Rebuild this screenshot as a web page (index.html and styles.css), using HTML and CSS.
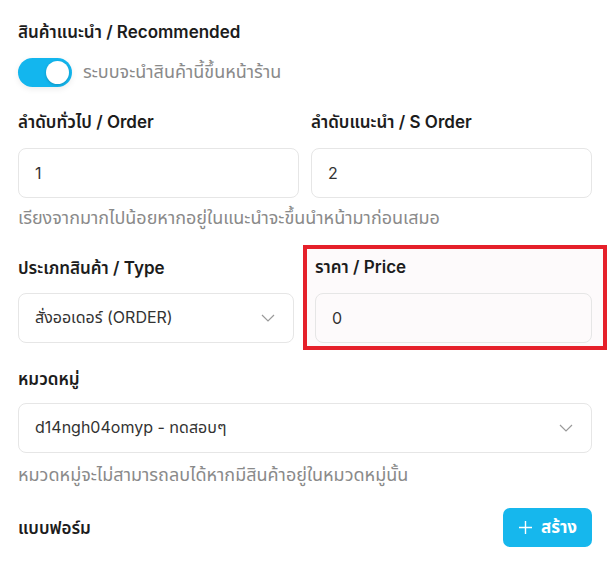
FILE: index.html
```html
<!DOCTYPE html>
<html lang="th">
<head>
<meta charset="utf-8">
<title>Product form</title>
<link rel="stylesheet" href="styles.css">
</head>
<body>
<div class="form">
  <div class="label first">สินค้าแนะนำ / Recommended</div>
  <div class="toggle-row">
    <span class="toggle"><span class="knob"></span></span>
    <span class="toggle-text">ระบบจะนำสินค้านี้ขึ้นหน้าร้าน</span>
  </div>

  <div class="grid2">
    <div class="field">
      <div class="label">ลำดับทั่วไป / Order</div>
      <div class="input">1</div>
    </div>
    <div class="field">
      <div class="label">ลำดับแนะนำ / S Order</div>
      <div class="input">2</div>
    </div>
  </div>
  <p class="help">เรียงจากมากไปน้อยหากอยู่ในแนะนำจะขึ้นนำหน้ามาก่อนเสมอ</p>

  <div class="grid-type">
    <div class="field type-field">
      <div class="label">ประเภทสินค้า / Type</div>
      <div class="input select">
        <span>สั่งออเดอร์ (ORDER)</span>
        <svg class="chev" width="14" height="8" viewBox="0 0 14 8"><path d="M1 1l6 6 6-6" fill="none" stroke="#9a9a9a" stroke-width="1.2"/></svg>
      </div>
    </div>
    <div class="highlight">
      <div class="label">ราคา / Price</div>
      <div class="input price">0</div>
    </div>
  </div>

  <div class="label cat-label">หมวดหมู่</div>
  <div class="input select">
    <span>d14ngh04omyp - ทดสอบๆ</span>
    <svg class="chev" width="14" height="8" viewBox="0 0 14 8"><path d="M1 1l6 6 6-6" fill="none" stroke="#9a9a9a" stroke-width="1.2"/></svg>
  </div>
  <p class="help cat-help">หมวดหมู่จะไม่สามารถลบได้หากมีสินค้าอยู่ในหมวดหมู่นั้น</p>

  <div class="form-row">
    <div class="label">แบบฟอร์ม</div>
    <button class="btn">
      <svg width="15" height="15" viewBox="0 0 15 15"><path d="M7.5 1v13M1 7.5h13" stroke="#fff" stroke-width="1.4" fill="none"/></svg>
      <span>สร้าง</span>
    </button>
  </div>
</div>
</body>
</html>
```
FILE: styles.css
```css
* { box-sizing: border-box; }
html, body { margin: 0; padding: 0; background: #fff; }
body {
  font-family: "Inter", "Noto Sans", "Noto Sans Thai", sans-serif;
  font-size: 16px;
  color: #1f1f1f;
}
.form {
  width: 574px;
  margin-left: 18px;
  padding-top: 20px;
}
.label {
  font-weight: 600;
  font-size: 17px;
  line-height: 24px;
  color: #1c1c1c;
}
.toggle-row {
  display: flex;
  align-items: center;
  gap: 11px;
  margin-top: 14px;
  height: 28px;
}
.toggle {
  width: 54px;
  height: 29px;
  border-radius: 15px;
  background: #13b6ee;
  position: relative;
  box-shadow: 0 2px 6px rgba(0,0,0,0.08);
}
.knob {
  position: absolute;
  right: 3px;
  top: 3px;
  width: 23px;
  height: 23px;
  border-radius: 50%;
  background: #fff;
  box-shadow: 0 1px 3px rgba(0,0,0,0.2);
}
.toggle-text { color: #8a8a8a; line-height: 24px; font-size: 18px; }
.grid2 {
  display: grid;
  grid-template-columns: 1fr 1fr;
  gap: 12px;
  margin-top: 24px;
}
.field .label { margin-bottom: 14px; }
.input {
  height: 50px;
  border: 1px solid #e6e6e6;
  border-radius: 8px;
  background: #fff;
  padding: 0 16px;
  display: flex;
  align-items: center;
  color: #333;
  font-size: 16px;
}
.select { justify-content: space-between; padding-right: 18px; }
.chev { flex: none; }
.help {
  margin: 8px 0 0;
  line-height: 24px;
  color: #8a8a8a;
  font-size: 18px;
}
.grid-type {
  display: grid;
  grid-template-columns: 276px 304px;
  gap: 9px;
  margin-top: 15px;
  margin-right: -15px;
}
.type-field { padding-top: 11px; }
.type-field .label { margin-bottom: 13px; }
.highlight {
  border: 4px solid #e5202a;
  background: #fdfafb;
  padding: 6px 11px 3px 8px;
}
.highlight .label { margin-bottom: 14px; }
.price { background: #fdfafb; }
.cat-label { margin-top: 17px; margin-bottom: 12px; }
.cat-help { margin-top: 10px; }
.form-row {
  display: flex;
  justify-content: space-between;
  align-items: center;
  margin-top: 21px;
}
.btn {
  display: flex;
  align-items: center;
  gap: 8px;
  height: 39px;
  width: 89px;
  justify-content: center;
  border: none;
  border-radius: 7px;
  background: #16b7ed;
  color: #fff;
  font-family: inherit;
  font-weight: 700;
  font-size: 17px;
  padding: 0;
}
```
